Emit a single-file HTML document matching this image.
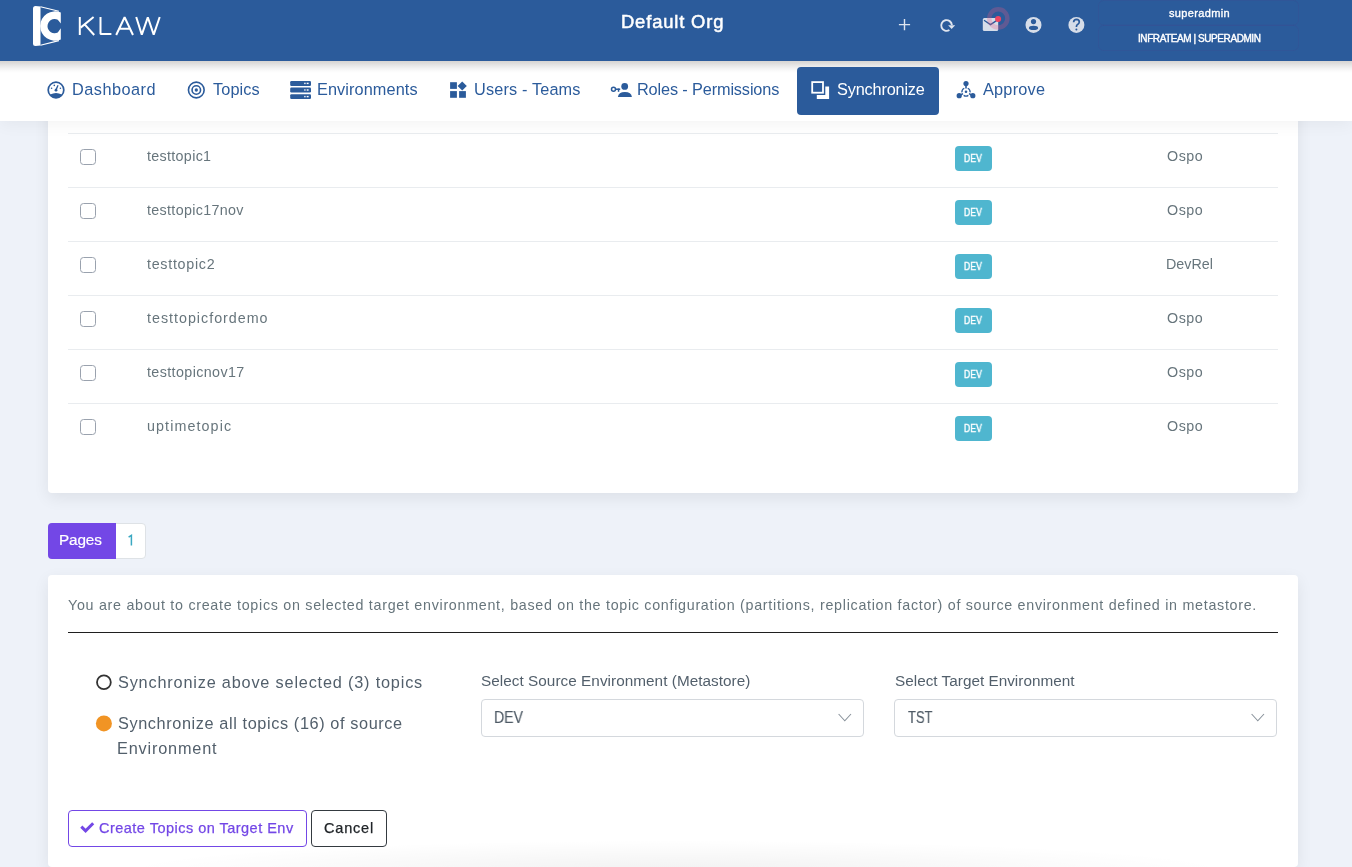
<!DOCTYPE html>
<html><head><meta charset="utf-8">
<style>
*{box-sizing:border-box;margin:0;padding:0}
html,body{width:1352px;height:867px;overflow:hidden}
body{background:#eef2f9;font-family:"Liberation Sans",sans-serif;position:relative}
.t{position:absolute;white-space:nowrap;z-index:10;will-change:transform}
#hdr{position:absolute;left:0;top:0;width:1352px;height:61px;background:#2b5b9b;z-index:6}
#nav{position:absolute;left:0;top:61px;width:1352px;height:60px;background:#fff;z-index:5;box-shadow:0 3px 16px rgba(0,0,0,0.05)}
#navshade{position:absolute;left:0;top:61px;width:1352px;height:12px;z-index:6;background:linear-gradient(rgba(45,35,25,0.19) 0px,rgba(45,35,25,0.16) 2px,rgba(20,20,20,0.11) 4px,rgba(0,0,0,0.063) 6.5px,rgba(0,0,0,0.027) 9px,rgba(0,0,0,0) 12px)}
.card{position:absolute;left:48px;width:1250px;background:#fff;border-radius:4px;box-shadow:0 5px 16px rgba(0,0,0,0.075)}
.line{position:absolute;left:68px;width:1210px;height:1px;background:#e9ecef;z-index:2}
.cb{position:absolute;left:80px;width:16px;height:16px;border:1.3px solid #9aa2ae;border-radius:3.5px;background:#fff;z-index:2}
.badge{position:absolute;left:955px;width:37px;height:24.5px;background:#4fb6cf;border-radius:4px;z-index:2}
svg{position:absolute;overflow:visible}
.sel{position:absolute;top:699px;width:383px;height:38px;border:1px solid #d4d8dd;border-radius:4px;background:#fff;z-index:2}
</style></head>
<body>
<div id="hdr"></div>
<div id="nav"></div>
<div id="navshade"></div>

<!-- logo -->
<svg style="left:0;top:0;z-index:8" width="200" height="61" viewBox="0 0 200 61">
  <g fill="#fff">
    <path d="M35.5,6 L40.5,6.6 L40.5,45.4 L35.5,46 Q33,46 33,43.5 L33,8.5 Q33,6 35.5,6 Z"/>
    <path d="M40.5,6.8 L58.9,11.3" stroke="#fff" stroke-width="1.1" fill="none"/>
    <path d="M40.5,45.2 L58.9,40.6" stroke="#fff" stroke-width="1.1" fill="none"/>
    <path d="M60.8,12.6 A14.7,14.7 0 1 0 60.8,39.5 L60.8,28.3 L57.8,32.57 A7.15,7.15 0 1 1 57.8,19.73 L60.8,23.4 Z"/>
  </g>
  <g fill="none" stroke="#fff" stroke-width="2" stroke-linejoin="bevel" stroke-linecap="butt">
    <path d="M79.8,17 L79.8,35"/>
    <path d="M93.6,17 L80.6,27.6 M84.6,24.4 L94.2,35"/>
    <path d="M100.5,17 L100.5,33.9 L111.4,33.9"/>
    <path d="M116.2,35 L124.6,17.3 L133,35 M119.2,28.7 L130,28.7"/>
    <path d="M136.2,17 L141.8,34.6 L147.8,17.3 L153.7,34.6 L159.7,17"/>
  </g>
</svg>

<!-- header icons -->
<svg style="left:0;top:0;z-index:8" width="1352" height="61" viewBox="0 0 1352 61">
  <g stroke="#dfe5ef" stroke-width="1.4" fill="none">
    <path d="M904.5,19 L904.5,30.2 M898.9,24.6 L910.1,24.6"/>
  </g>
  <path d="M949.4,30 A5.35,5.35 0 1 1 951.9,25" stroke="#dfe5ef" stroke-width="1.9" fill="none"/>
  <path d="M948.1,25.3 L955.2,25.3 L951.6,28.9 Z" fill="#dfe5ef"/>
  <rect x="982.8" y="18" width="15.4" height="13.1" rx="1.5" fill="#d6dde9"/>
  <path d="M984,20.3 L990.5,24.6 L996.5,20.6" stroke="#2b5b9b" stroke-width="1.3" fill="none"/>
  <circle cx="998.3" cy="18.4" r="9.05" fill="none" stroke="rgba(236,88,128,0.27)" stroke-width="4.5"/>
  <circle cx="998.1" cy="19" r="3.05" fill="#ee4562"/>
  <circle cx="1033.5" cy="24.9" r="8" fill="#d6dde9"/>
  <circle cx="1033.5" cy="21.6" r="2.6" fill="#2b5b9b"/>
  <ellipse cx="1033.5" cy="27.9" rx="4.6" ry="2.1" fill="#2b5b9b"/>
  <circle cx="1076.4" cy="24.9" r="8" fill="#d6dde9"/>
  <path d="M1073.6,22.2 Q1073.8,19.4 1076.5,19.4 Q1079.3,19.5 1079.3,22 Q1079.2,23.6 1077.6,24.4 Q1076.4,25.2 1076.4,27" stroke="#2b5b9b" stroke-width="1.7" fill="none"/>
  <circle cx="1076.4" cy="29.6" r="1" fill="#2b5b9b"/>
  <rect x="1098.5" y="0.5" width="200" height="24.5" rx="5" fill="none" stroke="rgba(70,70,140,0.22)" stroke-width="1"/>
  <rect x="1098.5" y="25.5" width="200" height="25" rx="5" fill="none" stroke="rgba(70,70,140,0.22)" stroke-width="1"/>
</svg>

<!-- nav -->
<div style="position:absolute;left:797px;top:67px;width:142px;height:48px;background:#2b5b9b;border-radius:4px;z-index:7"></div>
<svg style="left:0;top:61px;z-index:8" width="1352" height="60" viewBox="0 61 1352 60">
  <g fill="#2b5b9b">
    <!-- dashboard gauge -->
    <circle cx="56" cy="90" r="7.8" fill="none" stroke="#2b5b9b" stroke-width="1.7"/>
    <path d="M50.2,94.6 Q56,91.2 61.8,94.6 L60.5,96.6 Q56,98.6 51.5,96.6 Z"/>
    <path d="M57.5,85 L58.6,85.4 L56.8,90 L55.3,89.4 Z"/>
    <circle cx="56" cy="90.2" r="1.4"/>
    <circle cx="51.6" cy="88.3" r="0.8"/><circle cx="54.3" cy="85.4" r="0.8"/><circle cx="60.4" cy="88.3" r="0.8"/>
    <!-- topics bullseye -->
    <circle cx="196.3" cy="90" r="7.85" fill="none" stroke="#2b5b9b" stroke-width="1.6"/>
    <circle cx="196.3" cy="90" r="4.25" fill="none" stroke="#2b5b9b" stroke-width="1.6"/>
    <circle cx="196.3" cy="90" r="1.65"/>
    <!-- environments server -->
    <rect x="290.2" y="81" width="20.8" height="4.9" rx="1.2"/>
    <rect x="290.2" y="87.6" width="20.8" height="4.9" rx="1.2"/>
    <rect x="290.2" y="94.2" width="20.8" height="4.8" rx="1.2"/>
    <!-- users teams -->
    <rect x="450.1" y="82.2" width="6.8" height="6.7"/>
    <rect x="450.1" y="91.1" width="6.8" height="6.7"/>
    <rect x="459.1" y="91.1" width="6.8" height="6.7"/>
    <path d="M462.2,81.4 L466.8,86 L462.2,90.6 L457.6,86 Z"/>
    <!-- roles key + person -->
    <circle cx="613.5" cy="89.2" r="2" fill="none" stroke="#2b5b9b" stroke-width="1.5"/>
    <rect x="615" y="88.5" width="5.2" height="1.5"/>
    <rect x="617.8" y="88.5" width="1.5" height="3.3"/>
    <circle cx="624.7" cy="86.4" r="3.4"/>
    <path d="M617.9,97 Q618.5,92 624.9,92 Q631.3,92 631.9,97 Z"/>
    <!-- approve -->
    <circle cx="966" cy="83.6" r="2.6"/>
    <circle cx="959.2" cy="95.7" r="2.6"/>
    <circle cx="972.8" cy="95.7" r="2.6"/>
    <circle cx="966" cy="91.8" r="1.3"/>
    <path d="M966,85 L966,88.6 M960.5,95 L963,93.6 M971.5,95 L969,93.6" fill="none" stroke="#2b5b9b" stroke-width="1.6"/>
    <path d="M967.73,88.28 A4.1,4.1 0 0 1 970.08,92.36 M968.35,95.36 A4.1,4.1 0 0 1 963.65,95.36 M961.92,92.36 A4.1,4.1 0 0 1 964.27,88.28" fill="none" stroke="#2b5b9b" stroke-width="1.3"/>
  </g>
  <g fill="#fff">
    <rect x="304.2" y="82.7" width="1.4" height="1.4"/><rect x="306.7" y="82.7" width="1.9" height="1.4"/>
    <rect x="304.2" y="89.3" width="1.4" height="1.4"/><rect x="306.7" y="89.3" width="1.9" height="1.4"/>
    <rect x="304.2" y="95.9" width="1.4" height="1.4"/><rect x="306.7" y="95.9" width="1.9" height="1.4"/>
  </g>
  <!-- sync icon white -->
  <rect x="812.2" y="82.1" width="10.8" height="10.6" fill="none" stroke="#fff" stroke-width="1.8"/>
  <path d="M825.3,86.5 L829.1,86.5 L829.1,98.9 L816.8,98.9 L816.8,95 L825.3,95 Z" fill="#fff"/>
</svg>

<!-- table card (top clipped under nav) -->
<div class="card" style="top:100px;height:393px"></div>

<div class="line" style="top:133px"></div>
<div class="line" style="top:187px"></div>
<div class="line" style="top:241px"></div>
<div class="line" style="top:295px"></div>
<div class="line" style="top:349px"></div>
<div class="line" style="top:403px"></div>
<div class="cb" style="top:149px"></div>
<div class="cb" style="top:203px"></div>
<div class="cb" style="top:257px"></div>
<div class="cb" style="top:311px"></div>
<div class="cb" style="top:365px"></div>
<div class="cb" style="top:419px"></div>
<div class="badge" style="top:146.2px"></div>
<div class="badge" style="top:200.2px"></div>
<div class="badge" style="top:254.2px"></div>
<div class="badge" style="top:308.2px"></div>
<div class="badge" style="top:362.2px"></div>
<div class="badge" style="top:416.2px"></div>

<!-- pagination -->
<div style="position:absolute;left:48px;top:523px;width:98px;height:36px;border-radius:4px;background:#fff;border:1px solid #dee2e6;z-index:2"></div>
<div style="position:absolute;left:48px;top:523px;width:68px;height:36px;border-radius:4px 0 0 4px;background:#7347e6;z-index:3"></div>

<!-- second card -->
<div class="card" style="top:575px;height:292px"></div>
<div style="position:absolute;left:68px;top:632px;width:1210px;height:1.3px;background:#1f1f1f;z-index:2"></div>
<svg style="left:0;top:0;z-index:3" width="1352" height="867" viewBox="0 0 1352 867">
  <circle cx="103.9" cy="682.3" r="6.9" fill="none" stroke="#333" stroke-width="1.8"/>
  <circle cx="103.9" cy="723.4" r="8" fill="#f19424"/>
  <path d="M838.6,714 L844.8,720.8 L851,714" fill="none" stroke="#8a939c" stroke-width="1.1"/>
  <path d="M1251.6,714 L1257.8,720.8 L1264,714" fill="none" stroke="#8a939c" stroke-width="1.1"/>
  <path d="M81.3,826.6 L85.6,830.9 L93.2,823.3" fill="none" stroke="#7347e6" stroke-width="3" stroke-linejoin="miter"/>
</svg>
<div class="sel" style="left:481px"></div>
<div class="sel" style="left:894px"></div>
<div style="position:absolute;left:68px;top:810px;width:239px;height:37px;border:1.3px solid #7347e6;border-radius:4px;z-index:2"></div>
<div style="position:absolute;left:311px;top:810px;width:76px;height:37px;border:1.3px solid #343a40;border-radius:4px;z-index:2"></div>
<div style="position:absolute;left:48px;top:838px;width:1250px;height:29px;z-index:1;background:radial-gradient(ellipse 560px 32px at 628px 34px, rgba(0,0,0,0.055), rgba(0,0,0,0))"></div>

<svg style="left:0;top:0;z-index:4" width="200" height="600" viewBox="0 0 200 600"><path d="M128.6,537.2 L131.4,535.4 L131.4,545.4" fill="none" stroke="#3aa8c2" stroke-width="1.5"/></svg>
<div class="t" id="t_org" style="left:620.80px;top:11.00px;font-size:18.4px;line-height:22px;font-weight:normal;color:#ffffff;letter-spacing:0.839px;-webkit-text-stroke:0.5px currentColor;">Default Org</div>
<div class="t" id="t_user" style="left:1168.80px;top:7.00px;font-size:11px;line-height:13px;font-weight:normal;color:#ffffff;letter-spacing:0.360px;-webkit-text-stroke:0.35px currentColor;">superadmin</div>
<div class="t" id="t_role" style="left:1137.70px;top:33.00px;font-size:10px;line-height:12px;font-weight:normal;color:#ffffff;letter-spacing:-0.426px;-webkit-text-stroke:0.4px currentColor;">INFRATEAM | SUPERADMIN</div>
<div class="t" id="n_dash" style="left:72.30px;top:79.00px;font-size:16.3px;line-height:20px;font-weight:normal;color:#2b5b9b;letter-spacing:0.488px;">Dashboard</div>
<div class="t" id="n_top" style="left:213.20px;top:79.00px;font-size:16.3px;line-height:20px;font-weight:normal;color:#2b5b9b;letter-spacing:0.119px;">Topics</div>
<div class="t" id="n_env" style="left:316.50px;top:79.00px;font-size:16.3px;line-height:20px;font-weight:normal;color:#2b5b9b;letter-spacing:0.091px;">Environments</div>
<div class="t" id="n_usr" style="left:473.60px;top:79.00px;font-size:16.3px;line-height:20px;font-weight:normal;color:#2b5b9b;letter-spacing:0.150px;">Users - Teams</div>
<div class="t" id="n_rol" style="left:637.10px;top:79.00px;font-size:16.3px;line-height:20px;font-weight:normal;color:#2b5b9b;letter-spacing:-0.134px;">Roles - Permissions</div>
<div class="t" id="n_syn" style="left:837.20px;top:79.00px;font-size:16.3px;line-height:20px;font-weight:normal;color:#ffffff;letter-spacing:-0.174px;">Synchronize</div>
<div class="t" id="n_app" style="left:982.80px;top:79.00px;font-size:16.3px;line-height:20px;font-weight:normal;color:#2b5b9b;letter-spacing:0.219px;">Approve</div>
<div class="t" id="p_pages" style="left:59.40px;top:531.00px;font-size:15.3px;line-height:18px;font-weight:normal;color:#ffffff;letter-spacing:-0.131px;-webkit-text-stroke:0.2px currentColor;">Pages</div>
<div class="t" id="info" style="left:68.00px;top:597.00px;font-size:14.3px;line-height:17px;font-weight:normal;color:#67757c;letter-spacing:0.706px;">You are about to create topics on selected target environment, based on the topic configuration (partitions, replication factor) of source environment defined in metastore.</div>
<div class="t" id="r1" style="left:117.70px;top:672.00px;font-size:16.3px;line-height:20px;font-weight:normal;color:#525f6b;letter-spacing:0.809px;">Synchronize above selected (3) topics</div>
<div class="t" id="r2a" style="left:117.70px;top:713.00px;font-size:16.3px;line-height:20px;font-weight:normal;color:#525f6b;letter-spacing:0.603px;">Synchronize all topics (16) of source</div>
<div class="t" id="r2b" style="left:116.70px;top:738.00px;font-size:16.3px;line-height:20px;font-weight:normal;color:#525f6b;letter-spacing:0.822px;">Environment</div>
<div class="t" id="lab1" style="left:481.20px;top:672.00px;font-size:15.3px;line-height:18px;font-weight:normal;color:#525f6b;letter-spacing:0.044px;">Select Source Environment (Metastore)</div>
<div class="t" id="lab2" style="left:894.60px;top:672.00px;font-size:15.3px;line-height:18px;font-weight:normal;color:#525f6b;letter-spacing:0.015px;">Select Target Environment</div>
<div class="t" id="sel1" style="left:493.92px;top:708.00px;font-size:16px;line-height:19px;font-weight:normal;color:#4f5b66;transform:scaleX(0.8813);transform-origin:0 0;-webkit-text-stroke:0.15px currentColor;">DEV</div>
<div class="t" id="sel2" style="left:907.90px;top:708.00px;font-size:16px;line-height:19px;font-weight:normal;color:#4f5b66;transform:scaleX(0.8113);transform-origin:0 0;-webkit-text-stroke:0.15px currentColor;">TST</div>
<div class="t" id="btn1" style="left:98.50px;top:820.00px;font-size:14.5px;line-height:17px;font-weight:normal;color:#7347e6;letter-spacing:0.481px;-webkit-text-stroke:0.25px currentColor;">Create Topics on Target Env</div>
<div class="t" id="btn2" style="left:324.00px;top:820.00px;font-size:14.5px;line-height:17px;font-weight:normal;color:#212529;letter-spacing:0.817px;-webkit-text-stroke:0.25px currentColor;">Cancel</div>
<div class="t" id="tn0" style="left:146.90px;top:148.00px;font-size:14.3px;line-height:17px;font-weight:normal;color:#67757c;letter-spacing:0.317px;">testtopic1</div>
<div class="t" id="tm0" style="left:1166.80px;top:148.00px;font-size:14.3px;line-height:17px;font-weight:normal;color:#67757c;letter-spacing:0.527px;">Ospo</div>
<div class="t" id="bd0" style="left:964.40px;top:153.00px;font-size:10px;line-height:12px;font-weight:normal;color:#ffffff;transform:scaleX(0.8664);transform-origin:0 0;-webkit-text-stroke:0.4px currentColor;">DEV</div>
<div class="t" id="tn1" style="left:146.90px;top:202.00px;font-size:14.3px;line-height:17px;font-weight:normal;color:#67757c;letter-spacing:0.327px;">testtopic17nov</div>
<div class="t" id="tm1" style="left:1166.80px;top:202.00px;font-size:14.3px;line-height:17px;font-weight:normal;color:#67757c;letter-spacing:0.527px;">Ospo</div>
<div class="t" id="bd1" style="left:964.40px;top:207.00px;font-size:10px;line-height:12px;font-weight:normal;color:#ffffff;transform:scaleX(0.8664);transform-origin:0 0;-webkit-text-stroke:0.4px currentColor;">DEV</div>
<div class="t" id="tn2" style="left:146.90px;top:256.00px;font-size:14.3px;line-height:17px;font-weight:normal;color:#67757c;letter-spacing:0.717px;">testtopic2</div>
<div class="t" id="tm2" style="left:1165.80px;top:256.00px;font-size:14.3px;line-height:17px;font-weight:normal;color:#67757c;letter-spacing:-0.000px;">DevRel</div>
<div class="t" id="bd2" style="left:964.40px;top:261.00px;font-size:10px;line-height:12px;font-weight:normal;color:#ffffff;transform:scaleX(0.8664);transform-origin:0 0;-webkit-text-stroke:0.4px currentColor;">DEV</div>
<div class="t" id="tn3" style="left:146.90px;top:310.00px;font-size:14.3px;line-height:17px;font-weight:normal;color:#67757c;letter-spacing:0.991px;">testtopicfordemo</div>
<div class="t" id="tm3" style="left:1166.80px;top:310.00px;font-size:14.3px;line-height:17px;font-weight:normal;color:#67757c;letter-spacing:0.527px;">Ospo</div>
<div class="t" id="bd3" style="left:964.40px;top:315.00px;font-size:10px;line-height:12px;font-weight:normal;color:#ffffff;transform:scaleX(0.8664);transform-origin:0 0;-webkit-text-stroke:0.4px currentColor;">DEV</div>
<div class="t" id="tn4" style="left:146.90px;top:364.00px;font-size:14.3px;line-height:17px;font-weight:normal;color:#67757c;letter-spacing:0.389px;">testtopicnov17</div>
<div class="t" id="tm4" style="left:1166.80px;top:364.00px;font-size:14.3px;line-height:17px;font-weight:normal;color:#67757c;letter-spacing:0.527px;">Ospo</div>
<div class="t" id="bd4" style="left:964.40px;top:369.00px;font-size:10px;line-height:12px;font-weight:normal;color:#ffffff;transform:scaleX(0.8664);transform-origin:0 0;-webkit-text-stroke:0.4px currentColor;">DEV</div>
<div class="t" id="tn5" style="left:146.90px;top:418.00px;font-size:14.3px;line-height:17px;font-weight:normal;color:#67757c;letter-spacing:1.094px;">uptimetopic</div>
<div class="t" id="tm5" style="left:1166.80px;top:418.00px;font-size:14.3px;line-height:17px;font-weight:normal;color:#67757c;letter-spacing:0.527px;">Ospo</div>
<div class="t" id="bd5" style="left:964.40px;top:423.00px;font-size:10px;line-height:12px;font-weight:normal;color:#ffffff;transform:scaleX(0.8664);transform-origin:0 0;-webkit-text-stroke:0.4px currentColor;">DEV</div>
</body></html>
